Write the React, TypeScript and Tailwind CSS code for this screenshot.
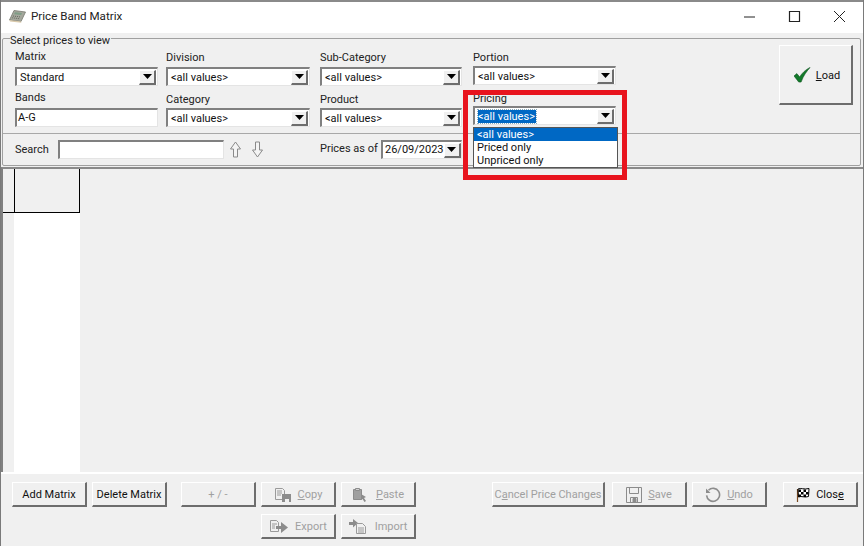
import React from 'react';

const raised = 'bg-[#f0f0f0] border-t border-l border-t-white border-l-white border-b-2 border-r-2 border-b-[#6d6d6d] border-r-[#6d6d6d]';
const sunken = 'bg-white border-t-2 border-l-2 border-t-[#808080] border-l-[#808080] border-b border-r border-b-[#e4e4e4] border-r-[#e4e4e4]';

const ArrowBtn: React.FC = () => (
  <div className={`w-[17px] h-[15px] flex items-center justify-center shrink-0 ${raised}`}>
    <svg width="9" height="5" viewBox="0 0 9 5"><path d="M0 0h9L4.500 5z" fill="#000" /></svg>
  </div>
);

const Select: React.FC<{ value: string; selected?: boolean }> = ({ value, selected }) => (
  <div className={`h-[19px] w-full flex items-center justify-between pl-[3px] pr-[1px] ${sunken}`}>
    <span className={`leading-[13px] ${selected ? 'bg-[#0068c4] text-white pr-[1px] outline-1 outline-dotted outline-[#8ab]' : ''}`}>{value}</span>
    <ArrowBtn />
  </div>
);

const Label: React.FC<{ children: React.ReactNode; className?: string }> = ({ children, className = '' }) => (
  <div className={`h-[14px] leading-[14px] text-[#222] ${className}`}>{children}</div>
);

const Btn: React.FC<{ children: React.ReactNode; disabled?: boolean; width?: string }> = ({ children, disabled, width = 'w-[75px]' }) => (
  <div className={`h-[25px] pt-[2px] flex items-center justify-center gap-[6px] shrink-0 whitespace-nowrap ${width} ${raised} ${disabled ? 'text-[#a0a0a0]' : 'text-[#111]'}`}>
    {children}
  </div>
);

const CopyIcon = () => (
  <svg width="18" height="16" viewBox="0 0 18 16" fill="none" stroke="#9a9a9a">
    <path d="M1.500 1.500h7l2 2v9h-9zM3 4h5M3 6h5M3 8h4" fill="#f0f0f0" />
    <path d="M8 7h9v8h-2v-3h-4v3H8z" fill="#8c8c8c" stroke="none" />
  </svg>
);

const PasteIcon = () => (
  <svg width="18" height="16" viewBox="0 0 18 16" fill="none" stroke="#8c8c8c">
    <path d="M1.500 2.500h8v10h-8z" fill="#a0a0a0" />
    <path d="M3.500 1.500h4v2h-4z" fill="#d0d0d0" />
    <path d="M9 7l5 3-2 1 2 3-1.500 1-2-3-1.500 1z" fill="#8c8c8c" stroke="none" />
  </svg>
);

const ExportIcon = () => (
  <svg width="20" height="16" viewBox="0 0 20 16" fill="none" stroke="#9a9a9a">
    <path d="M1.500 1.500h6l2 2v9h-8zM3 5h5M3 7h3M3 9h3" fill="#f0f0f0" />
    <path d="M7 7h5V3l7 5.500L12 14v-4H7z" fill="#8c8c8c" stroke="none" />
  </svg>
);

const ImportIcon = () => (
  <svg width="20" height="16" viewBox="0 0 20 16" fill="none" stroke="#9a9a9a">
    <path d="M0 3h4V0l5 4-5 4.500V6H0z" fill="#8c8c8c" stroke="none" />
    <path d="M7.500 4.500h6l3 3v7h-9zM9 9h6M9 11h6M9 13h6" fill="#f0f0f0" />
  </svg>
);

const SaveIcon = () => (
  <svg width="16" height="16" viewBox="0 0 16 16" fill="none" stroke="#8c8c8c">
    <path d="M.5.500h15v15H.5z" />
    <path d="M3.500.500v6h9v-6M4.500 15.500v-5h7v5" />
    <path d="M7 11.500h3v4H7z" fill="#8c8c8c" />
  </svg>
);

const UndoIcon = () => (
  <svg width="16" height="16" viewBox="0 0 16 16" fill="none" stroke="#8c8c8c" strokeWidth="1.600">
    <path d="M3.500 3.200A6.500 6.500 0 1 1 1.600 8.400" />
    <path d="M1 1.500v4.600h4.600z" fill="#8c8c8c" stroke="none" />
  </svg>
);

const FlagIcon = () => (
  <svg width="14" height="16" viewBox="0 0 14 16">
    <path d="M1.500 2v13" stroke="#7a4a20" strokeWidth="1.200" />
    <path d="M2 2c3-1.500 6 1 11-.5l-.5 8c-4 1.500-7-1-10 .5z" fill="#fff" stroke="#000" />
    <path d="M2.500 2.500h2.500v2.500H2.500zM7.500 2.500H10V5H7.500zM5 5h2.500v2.500H5zM10 5h2.500v2.500H10zM2.500 7.500H5V10H2.500zM7.500 7.500H10V10H7.500z" fill="#000" />
  </svg>
);

const CheckIcon = () => (
  <svg width="17" height="16" viewBox="0 0 18 16">
    <path d="M0 9l3-2.500 3 3.500C8.500 6 12 2.500 17 0c-3.500 4-7 8.500-9.500 15.500H5z" fill="#127a2a" stroke="#0b4f1a" strokeWidth=".6" />
  </svg>
);

const CalcIcon = () => (
  <svg width="17" height="13" viewBox="0 0 17 13">
    <path d="M5 .5l11.500 1.500-4.500 9.500L.5 10z" fill="#a4a79c" stroke="#77796f" strokeWidth=".8" />
    <path d="M6 2.200l7 .9-.9 2-7-.9z" fill="#7f9d86" />
    <path d="M4 6l7 .9M3.200 7.800l7 .9" stroke="#66685f" strokeDasharray="1 1" />
    <path d="M.5 10l11.500 1.500.3 1.200L1 11.500z" fill="#d9c9aa" />
  </svg>
);

const HollowArrow: React.FC<{ down?: boolean }> = ({ down }) => (
  <svg width="11" height="17" viewBox="0 0 11 17" fill="#f4f4f4" stroke="#8a8a8a" className={down ? 'rotate-180' : ''}>
    <path d="M5.500 1L10.500 8H7.500v8h-4V8H.5z" />
  </svg>
);

const App: React.FC = () => {
  return (
    <div className="w-[867px] h-[546px] overflow-hidden bg-white">
      <div className="relative w-[864px] h-[546px] flex flex-col bg-[#f0f0f0] text-[11px] text-[#111] font-['Roboto',sans-serif] border-l border-r border-[#7a7a7a]">
        {/* title bar */}
        <div className="h-[33px] shrink-0 bg-white border-t-2 border-[#8a8a8a] flex items-center pl-[8px] pr-[16px] pb-[2px]">
          <CalcIcon />
          <span className="ml-[5px] text-[#222] text-[11.6px]">Price Band Matrix</span>
          <div className="ml-auto flex items-center gap-[30px]">
            <svg width="15" height="15" viewBox="0 0 15 15"><path d="M2 8h11" stroke="#222" /></svg>
            <svg width="15" height="15" viewBox="0 0 15 15"><path d="M2.500 2.500h10v10h-10z" fill="none" stroke="#222" strokeWidth="1.200" /></svg>
            <svg width="15" height="15" viewBox="0 0 15 15"><path d="M2 2l11 11M13 2L2 13" stroke="#222" /></svg>
          </div>
        </div>

        {/* selection group */}
        <div className="h-[128px] shrink-0 mt-[5px] ml-[1px] mr-[2px] relative border border-[#a0a0a0] rounded-[2px] flex flex-col">
          <span className="absolute left-[7px] -top-[5px] h-[13px] leading-[13px] bg-[#f0f0f0] pr-[1px] text-[#222]">Select prices to view</span>
          <div className="h-[95px] shrink-0 border-b border-[#a8a8a8] flex pl-[12px] pt-[11px]">
            <div className="w-[143px] flex flex-col">
              <Label>Matrix</Label>
              <div className="mt-[3px]"><Select value="Standard" /></div>
              <Label className="mt-[5px]">Bands</Label>
              <div className={`mt-[3px] h-[19px] pl-[1px] flex items-center ${sunken}`}>A-G</div>
            </div>
            <div className="w-[144px] ml-[8px] flex flex-col">
              <Label className="mt-[1px]">Division</Label>
              <div className="mt-[2px]"><Select value="<all values>" /></div>
              <Label className="mt-[7px]">Category</Label>
              <div className="mt-[1px]"><Select value="<all values>" /></div>
            </div>
            <div className="w-[142px] ml-[10px] flex flex-col">
              <Label className="mt-[1px]">Sub-Category</Label>
              <div className="mt-[2px]"><Select value="<all values>" /></div>
              <Label className="mt-[7px]">Product</Label>
              <div className="mt-[1px]"><Select value="<all values>" /></div>
            </div>
            <div className="w-[143px] ml-[11px] flex flex-col">
              <Label className="mt-[1px]">Portion</Label>
              <div className="mt-[1px]"><Select value="<all values>" /></div>
              <Label className="mt-[7px]">Pricing</Label>
              <div><Select value="<all values>" selected /></div>
            </div>
            <div className={`w-[74px] h-[60px] ml-[163px] -mt-[5px] pl-[3px] flex items-center justify-center gap-[5px] ${raised}`}>
              <CheckIcon />
              <span className="mt-[4px]"><span className="underline">L</span>oad</span>
            </div>
          </div>
          <div className="flex-1 flex items-center pl-[12px]">
            <span className="w-[43px] mt-[2px] text-[#222]">Search</span>
            <div className={`w-[166px] h-[19px] ${sunken}`} />
            <div className="ml-[6px] flex gap-[11px]"><HollowArrow /><HollowArrow down /></div>
            <span className="ml-[57px] w-[61px] text-[#222]">Prices as of</span>
            <div className={`w-[81px] h-[19px] flex items-center justify-between pl-[2px] pr-[1px] ${sunken}`}>
              <span>26/09/2023</span>
              <ArrowBtn />
            </div>
          </div>
        </div>

        {/* grid area */}
        <div className="mt-[1px] h-[305px] shrink-0 border-t-2 border-[#8a8a8a] border-l-2 border-l-[#808080] pl-[11px]">
          <div className="w-[66px] h-full bg-white">
            <div className="h-[44px] border-l border-r border-b border-black bg-[#f0f0f0] relative">
              <div className="absolute -left-[12px] -bottom-[1px] w-[12px] h-[1px] bg-black" />
            </div>
          </div>
        </div>

        {/* footer buttons */}
        <div className="flex-1 border-t-2 border-white flex flex-col gap-[7px] pl-[11px] pt-[8px]">
          <div className="flex">
            <Btn>Add Matrix</Btn>
            <div className="ml-[5px]"><Btn>Delete Matrix</Btn></div>
            <div className="ml-[14px]"><Btn disabled>+ / -</Btn></div>
            <div className="ml-[5px]"><Btn disabled><CopyIcon /><span><span className="underline">C</span>opy</span></Btn></div>
            <div className="ml-[5px]"><Btn disabled><PasteIcon /><span><span className="underline">P</span>aste</span></Btn></div>
            <div className="ml-[76px]"><Btn disabled width="w-[113px]"><span>C<span className="underline">a</span>ncel Price Changes</span></Btn></div>
            <div className="ml-[7px]"><Btn disabled><SaveIcon /><span><span className="underline">S</span>ave</span></Btn></div>
            <div className="ml-[5px]"><Btn disabled><UndoIcon /><span><span className="underline">U</span>ndo</span></Btn></div>
            <div className="ml-[16px]"><Btn><FlagIcon /><span>Clos<span className="underline">e</span></span></Btn></div>
          </div>
          <div className="flex pl-[249px] gap-[5px]">
            <Btn disabled><ExportIcon />Export</Btn>
            <Btn disabled><ImportIcon />Import</Btn>
          </div>
        </div>

        {/* open dropdown list */}
        <div className="absolute left-[472px] top-[127px] w-[145px] h-[41px] bg-white border border-[#555] leading-[13px]">
          <div className="h-[13px] bg-[#0068c4] text-white pl-[3px]">&lt;all values&gt;</div>
          <div className="h-[13px] pl-[3px]">Priced only</div>
          <div className="h-[13px] pl-[3px]">Unpriced only</div>
        </div>

        {/* red annotation */}
        <div className="absolute left-[462px] top-[90px] w-[164px] h-[90px] border-[5px] border-[#e8141e]" />
      </div>
    </div>
  );
};

export default App;
